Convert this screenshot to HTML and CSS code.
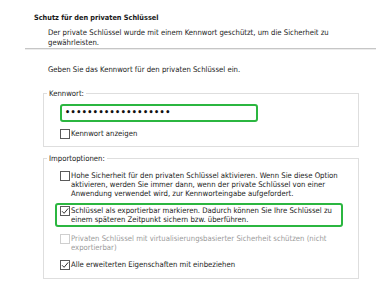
FILE: index.html
```html
<!DOCTYPE html>
<html lang="de">
<head>
<meta charset="utf-8">
<title>Schutz für den privaten Schlüssel</title>
<link rel="stylesheet" href="styles.css">
</head>
<body>
<div class="page">
  <div class="head">
    <div class="title">Schutz für den privaten Schlüssel</div>
    <p class="desc">Der private Schlüssel wurde mit einem Kennwort geschützt, um die Sicherheit zu<br>gewährleisten.</p>
  </div>
  <div class="sep"></div>
  <p class="prompt">Geben Sie das Kennwort für den privaten Schlüssel ein.</p>

  <fieldset class="group group-pw">
    <legend>Kennwort:</legend>
    <div class="inner">
      <div class="pw">•••••••••••••••••••</div>
      <div class="check row-show">
        <span class="box"></span>
        <span class="lbl">Kennwort anzeigen</span>
      </div>
    </div>
  </fieldset>

  <fieldset class="group group-import">
    <legend>Importoptionen:</legend>
    <div class="inner">
      <div class="check opt1">
        <span class="box"></span>
        <span class="lbl">Hohe Sicherheit für den privaten Schlüssel aktivieren. Wenn Sie diese Option<br>aktivieren, werden Sie immer dann, wenn der private Schlüssel von einer<br>Anwendung verwendet wird, zur Kennworteingabe aufgefordert.</span>
      </div>
      <div class="highlight">
        <div class="check">
          <span class="box checked"><svg viewBox="0 0 10 10" width="10" height="10"><path d="M2 5.2 L4.1 7.3 L8.2 2.4" fill="none" stroke="#333" stroke-width="1"/></svg></span>
          <span class="lbl">Schlüssel als exportierbar markieren. Dadurch können Sie Ihre Schlüssel zu<br>einem späteren Zeitpunkt sichern bzw. überführen.</span>
        </div>
      </div>
      <div class="check opt3 disabled">
        <span class="box"></span>
        <span class="lbl">Privaten Schlüssel mit virtualisierungsbasierter Sicherheit schützen (nicht<br>exportierbar)</span>
      </div>
      <div class="check opt4">
        <span class="box checked"><svg viewBox="0 0 10 10" width="10" height="10"><path d="M2 5.2 L4.1 7.3 L8.2 2.4" fill="none" stroke="#333" stroke-width="1"/></svg></span>
        <span class="lbl">Alle erweiterten Eigenschaften mit einbeziehen</span>
      </div>
    </div>
  </fieldset>
</div>
</body>
</html>
```

FILE: styles.css
```css
* { box-sizing: border-box; }
html, body { margin: 0; padding: 0; background: #fff; }
body {
  font-family: "DejaVu Sans Condensed", "DejaVu Sans", sans-serif;
  font-stretch: condensed;
  font-size: 7.7px;
  line-height: 9px;
  color: #1a1a1a;
  width: 380px;
  height: 285px;
  overflow: hidden;
}
.page { padding-top: 13px; }
.head { padding-left: 34px; }
.title { font-weight: bold; font-size: 7.3px; line-height: 9px; }
.desc { margin: 6px 0 0 14px; line-height: 9.5px; }
.sep {
  margin: 1px 4px 0 25px;
  height: 2px;
  border-top: 1px solid #c6c6c6;
  border-bottom: 1px solid #ececec;
}
.prompt { margin: 15px 0 0 48px; line-height: 9px; }
.group {
  margin: 0 0 0 43px;
  width: 316px;
  border: 1px solid #dedede;
  padding: 0 0 0 3px;
  min-width: 0;
}
.group legend { padding: 0 2px; line-height: 9px; }
.group-pw { margin-top: 15px; padding-bottom: 7px; }
.group-import { margin-top: 7.5px; padding-bottom: 8.5px; }
.inner { margin-left: 13px; }
.pw {
  margin-top: 5.5px;
  width: 198px;
  height: 18px;
  border: 2px solid #2bb640;
  border-radius: 3px;
  padding-left: 3px;
  font-family: "DejaVu Sans", sans-serif;
  font-stretch: normal;
  font-size: 8px;
  font-weight: bold;
  line-height: 14px;
  letter-spacing: 0.45px;
  color: #111;
}
.check { display: flex; align-items: flex-start; gap: 1px; }
.box {
  flex: none;
  width: 10px;
  height: 10px;
  margin-top: -0.5px;
  border: 1px solid #5a5a5a;
  background: #fff;
  position: relative;
}
.box svg { position: absolute; left: -1px; top: -1px; }
.row-show { margin-top: 7.5px; }
.opt1 { margin-top: 8px; }
.highlight {
  margin: 4.5px 0 0 -5px;
  width: 288px;
  border: 2px solid #2bb640;
  border-radius: 3px;
  padding: 1.5px 0 0.5px 3px;
}
.opt3 { margin-top: 7.5px; }
.disabled { color: #9a9a9a; }
.disabled .box { border-color: #cfcfcf; }
.opt4 { margin-top: 8px; }
```
